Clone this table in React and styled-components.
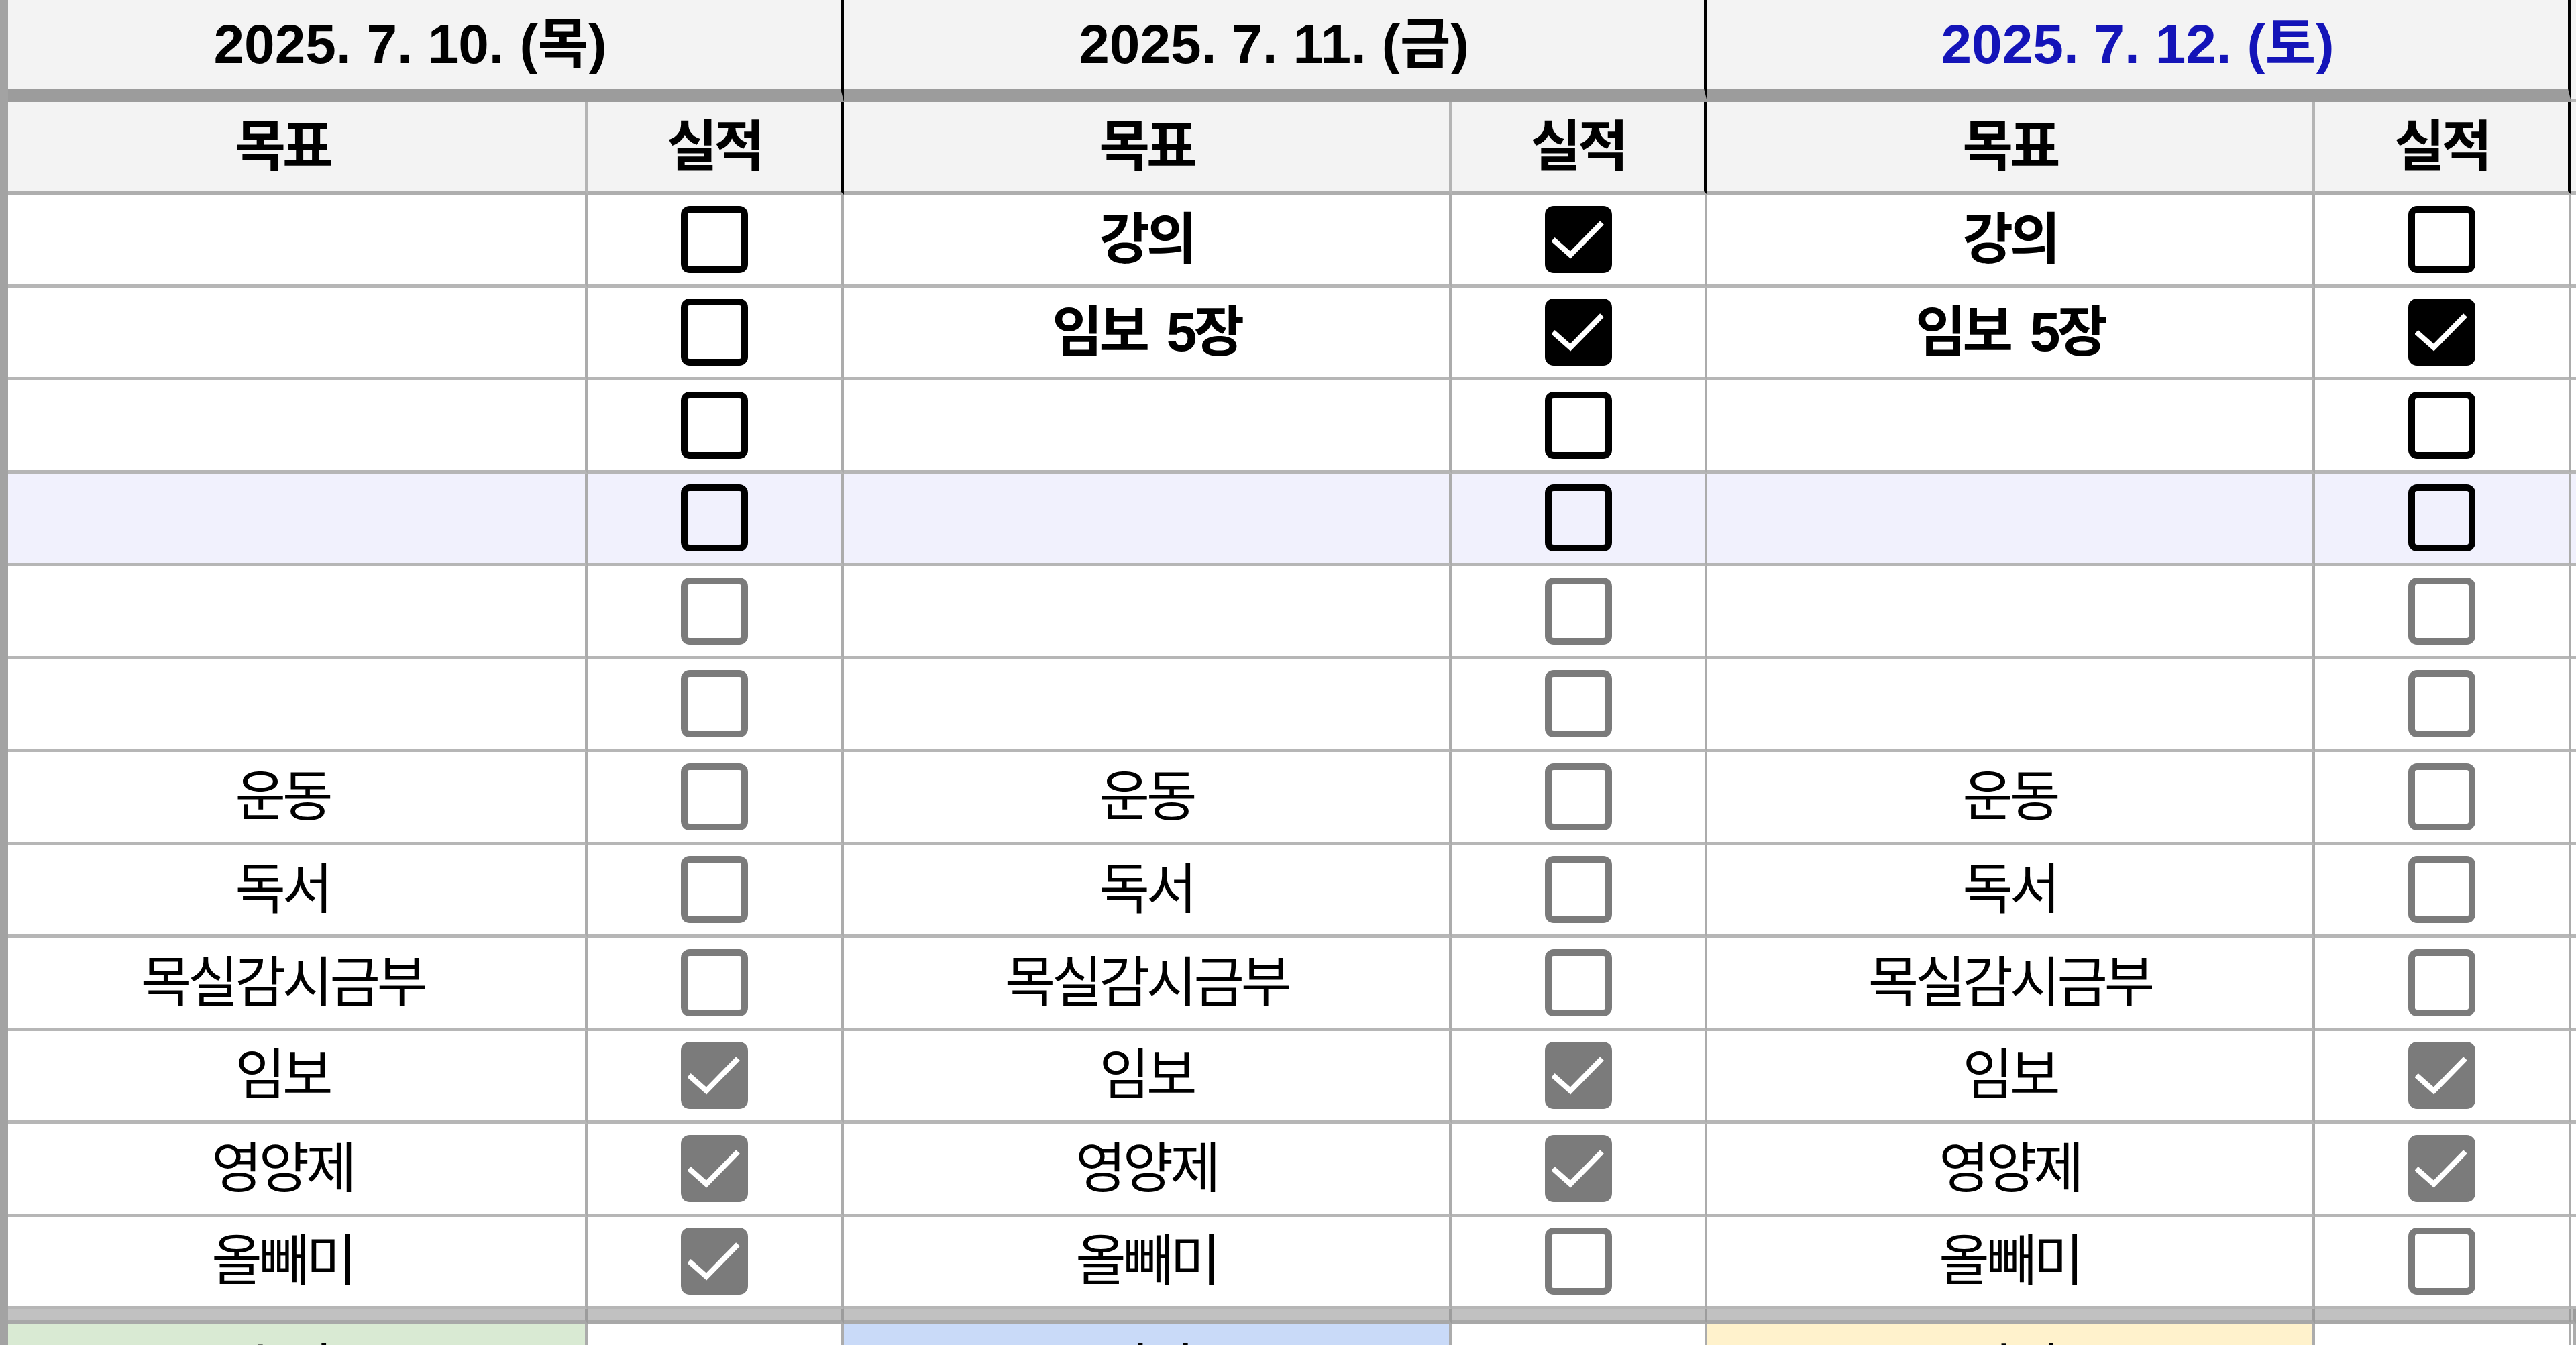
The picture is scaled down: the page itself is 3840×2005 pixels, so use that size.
import React from "react";
import styled, { createGlobalStyle } from "styled-components";

const GlobalStyle = createGlobalStyle`
  html, body {
    margin: 0;
    padding: 0;
    background: #ffffff;
    overflow: hidden;
  }
  body {
    font-family: "Liberation Sans", "Noto Sans CJK KR", sans-serif;
    color: #000000;
  }
`;

const GOALS = ["", "", "", "", "", "", "운동", "독서", "목실감시금부", "임보", "영양제", "올빼미"];

const days = [
  {
    date: "2025. 7. 10. (목)",
    color: "#000000",
    goals: GOALS,
    checks: [0, 0, 0, 0, 0, 0, 0, 0, 0, 1, 1, 1],
    footer: { label: "수면", bg: "#d9ead3" },
  },
  {
    date: "2025. 7. 11. (금)",
    color: "#000000",
    goals: ["강의", "임보 5장", ...GOALS.slice(2)],
    checks: [1, 1, 0, 0, 0, 0, 0, 0, 0, 1, 1, 0],
    footer: { label: "식단", bg: "#c9daf8" },
  },
  {
    date: "2025. 7. 12. (토)",
    color: "#1414b8",
    goals: ["강의", "임보 5장", ...GOALS.slice(2)],
    checks: [0, 1, 0, 0, 0, 0, 0, 0, 0, 1, 1, 0],
    footer: { label: "일기", bg: "#fff2cc" },
  },
];

// rows 0-3 are formatted bold with black boxes, row 3 is tinted
const isStrong = (i) => i < 4;
const rowBg = (i) => (i === 3 ? "#f1f1fd" : "#ffffff");

const App = () => {
  return (
    <>
      <GlobalStyle />
      <Viewport>
        <Sheet>
          {days.map((day) => (
            <DateCell key={day.date} color={day.color}>
              {day.date}
            </DateCell>
          ))}
          <Filler bg="#f3f3f3" h={152} />

          {days.map((day) => (
            <React.Fragment key={day.date + "-head"}>
              <HeadCell>목표</HeadCell>
              <HeadCell edge>실적</HeadCell>
            </React.Fragment>
          ))}
          <Filler bg="#f3f3f3" h={138} />

          {GOALS.map((_, i) => (
            <React.Fragment key={i}>
              {days.map((day) => (
                <React.Fragment key={day.date + i}>
                  <Cell bg={rowBg(i)} strong={isStrong(i)}>
                    {day.goals[i]}
                  </Cell>
                  <Cell bg={rowBg(i)}>
                    <CheckBox dark={isStrong(i)} checked={!!day.checks[i]} />
                  </Cell>
                </React.Fragment>
              ))}
              <Filler bg={rowBg(i)} h={138.5} />
            </React.Fragment>
          ))}

          {days.map((day) => (
            <React.Fragment key={day.date + "-band"}>
              <Band />
              <Band />
            </React.Fragment>
          ))}
          <Band />

          {days.map((day) => (
            <React.Fragment key={day.date + "-foot"}>
              <FootCell bg={day.footer.bg}>{day.footer.label}</FootCell>
              <FootCell bg="#ffffff" />
            </React.Fragment>
          ))}
          <FootCell bg="#ffffff" />
        </Sheet>
      </Viewport>
    </>
  );
};

export default App;

const CheckBox = ({ dark, checked }) => (
  <Box tone={dark ? "#000000" : "#7b7b7b"} checked={checked}>
    {checked && (
      <svg width="80" height="80" viewBox="0 0 80 80">
        <polyline
          points="2,40 28,63 75,15"
          fill="none"
          stroke="#ffffff"
          strokeWidth="8"
        />
      </svg>
    )}
  </Box>
);

const Box = styled.span`
  box-sizing: border-box;
  width: 100px;
  height: 100px;
  border: 10px solid ${(p) => p.tone};
  border-radius: 13px;
  background: ${(p) => (p.checked ? p.tone : "transparent")};
  display: flex;
  align-items: center;
  justify-content: center;

  svg {
    display: block;
  }
`;

// the sheet is scrolled 42px to the right, so the first column is clipped
const Viewport = styled.div`
  box-sizing: border-box;
  width: 3840px;
  height: 2005px;
  border-left: 12px solid #a3a3a3;
  overflow: hidden;
`;

const Sheet = styled.div`
  width: 3870px;
  margin-left: -42px;
  display: grid;
  grid-template-columns: 906px 382px 906px 381px 906px 382px 1fr;
  align-content: start;
`;

const CellBase = styled.div`
  box-sizing: border-box;
  display: flex;
  align-items: center;
  justify-content: center;
  line-height: 1;
  white-space: nowrap;
  overflow: hidden;
`;

const DateCell = styled(CellBase)`
  grid-column: span 2;
  height: 152px;
  background: #f3f3f3;
  border-bottom: 20px solid #9c9c9c;
  border-right: 5px solid #000000;
  font-size: 82px;
  font-weight: 700;
  color: ${(p) => p.color};
`;

const HeadCell = styled(CellBase)`
  height: 138px;
  background: #f3f3f3;
  border-bottom: 5px solid #aeaeae;
  border-right: ${(p) => (p.edge ? "5px solid #000000" : "4px solid #b4b4b4")};
  font-size: 82px;
  font-weight: 700;
  letter-spacing: -5px;
`;

const Cell = styled(CellBase)`
  height: 138.5px;
  background: ${(p) => p.bg};
  border-bottom: 5px solid #b6b6b6;
  border-right: 4px solid #acacac;
  font-size: 82px;
  font-weight: ${(p) => (p.strong ? 700 : 400)};
  letter-spacing: -5px;
  word-spacing: 12px;
`;

const Filler = styled.div`
  box-sizing: border-box;
  height: ${(p) => p.h}px;
  background: ${(p) => p.bg};
  border-bottom: 5px solid #b6b6b6;
`;

const Band = styled.div`
  box-sizing: border-box;
  height: 21px;
  background: #c1c1c1;
  border-bottom: 5px solid #a8a8a8;
  border-right: 4px solid #9c9c9c;
`;

const FootCell = styled(CellBase)`
  height: 138px;
  background: ${(p) => p.bg};
  border-right: 4px solid #acacac;
  font-size: 82px;
  letter-spacing: -5px;
`;
